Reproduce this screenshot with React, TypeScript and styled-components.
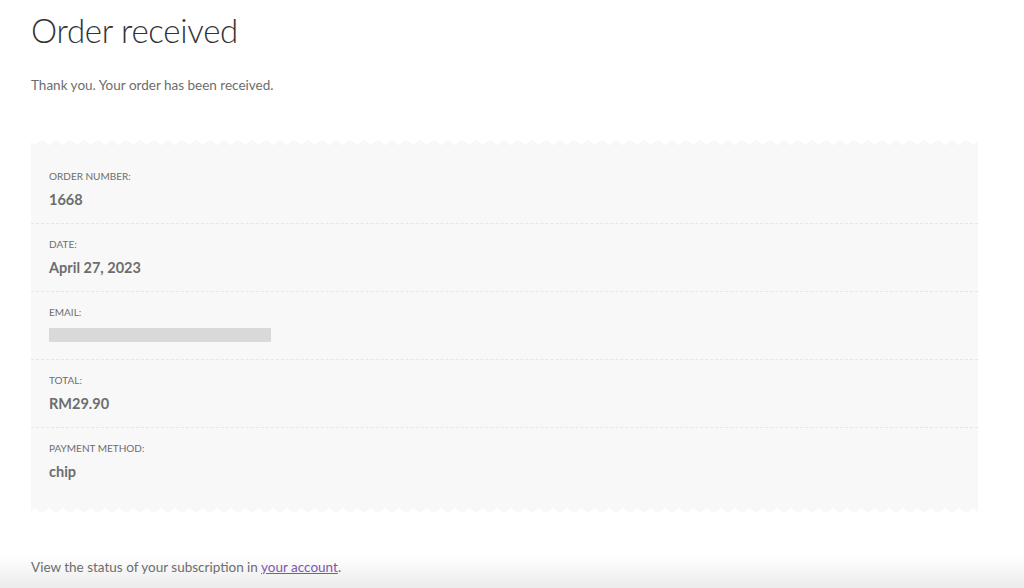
import styled, { createGlobalStyle } from 'styled-components';

const GlobalStyle = createGlobalStyle`
  html, body {
    margin: 0;
    padding: 0;
    background: #fff;
  }
  body {
    font-family: Lato, 'Open Sans', sans-serif;
    color: #6d6d6d;
  }
`;

const Page = styled.div`
  min-height: 588px;
  box-sizing: border-box;
  padding: 8px 46px 0 31px;
  background: linear-gradient(
    to bottom,
    #fff 0,
    #fff 555px,
    #ebebeb 588px
  );
`;

const Title = styled.h1`
  margin: 0;
  font-size: 33px;
  line-height: 44px;
  font-weight: 300;
  color: #333;
  letter-spacing: -0.3px;
`;

const Notice = styled.p`
  margin: 22px 0 0;
  font-size: 13.5px;
  line-height: 22px;
`;

const zigzag = `
  content: '';
  display: block;
  height: 5px;
  background-color: #f8f8f8;
  background-image: linear-gradient(to bottom right, #fff 50%, transparent 50%),
    linear-gradient(to bottom left, #fff 50%, transparent 50%);
  background-size: 14px 10px;
  background-position: 4px bottom;
  background-repeat: repeat-x;
`;

const Receipt = styled.div`
  margin-top: 44px;

  &::before {
    ${zigzag}
  }

  &::after {
    ${zigzag}
    transform: scaleY(-1);
  }
`;

const Rows = styled.ul`
  list-style: none;
  margin: 0;
  padding: 11px 0 13px;
  background: #f8f8f8;
`;

const Row = styled.li`
  padding: 13px 18px 12px;
  border-bottom: 1px dashed #e6e6e6;

  &:last-child {
    border-bottom: 0;
  }
`;

const Label = styled.div`
  font-size: 10px;
  line-height: 14px;
  text-transform: uppercase;
  color: #6d6d6d;
`;

const Value = styled.div`
  display: flow-root;
  margin-top: 6px;
  min-height: 22px;
  font-size: 14.5px;
  line-height: 22px;
  font-weight: 700;
  color: #6d6d6d;
`;

const Redacted = styled.span`
  display: block;
  width: 222px;
  height: 14px;
  margin-top: 3px;
  background: #d9d9d9;
`;

const Footer = styled.p`
  margin: 43px 0 0;
  font-size: 13.5px;
  line-height: 22px;

  a {
    color: #7f54b3;
    text-decoration: underline;
  }
`;

const details = [
  { label: 'Order number:', value: '1668' },
  { label: 'Date:', value: 'April 27, 2023' },
  { label: 'Email:', value: null },
  { label: 'Total:', value: 'RM29.90' },
  { label: 'Payment method:', value: 'chip' },
];

export default function App() {
  return (
    <Page>
      <GlobalStyle />
      <Title>Order received</Title>
      <Notice>Thank you. Your order has been received.</Notice>
      <Receipt>
        <Rows>
          {details.map(d => (
            <Row key={d.label}>
              <Label>{d.label}</Label>
              <Value>{d.value ?? <Redacted />}</Value>
            </Row>
          ))}
        </Rows>
      </Receipt>
      <Footer>
        View the status of your subscription in <a href="#">your account</a>.
      </Footer>
    </Page>
  );
}
